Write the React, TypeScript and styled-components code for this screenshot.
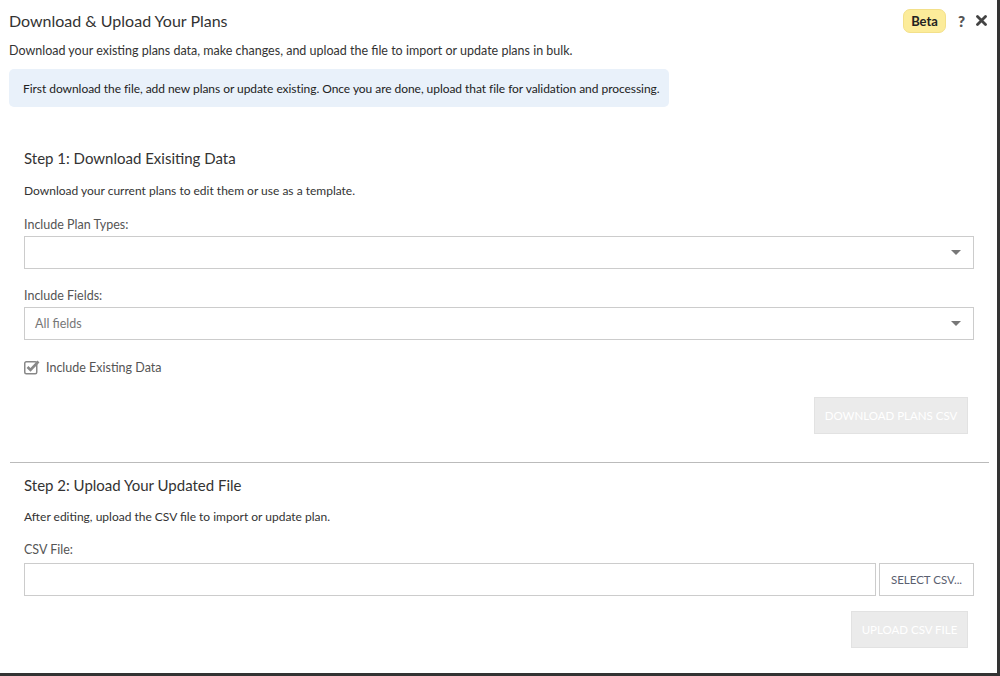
import styled, { createGlobalStyle } from "styled-components";

const GlobalStyle = createGlobalStyle`
  html, body {
    margin: 0;
    padding: 0;
    background: #fff;
  }
  body {
    font-family: "Segoe UI", Lato, "Open Sans", sans-serif;
    color: #333;
  }
`;

const App = () => {
  return (
    <>
      <GlobalStyle />
      <Modal>
        <Header>
          <Title>Download &amp; Upload Your Plans</Title>
          <HeaderTools>
            <BetaBadge>Beta</BetaBadge>
            <ToolIcon aria-label="help">?</ToolIcon>
            <ToolIcon aria-label="close">
              <svg width="11" height="11" viewBox="0 0 11 11">
                <path d="M1.5 1.5 L9.5 9.5 M9.5 1.5 L1.5 9.5" stroke="#444" strokeWidth="2.8" strokeLinecap="round" />
              </svg>
            </ToolIcon>
          </HeaderTools>
        </Header>
        <Intro>
          Download your existing plans data, make changes, and upload the file to import or update plans in bulk.
        </Intro>
        <InfoBox>
          First download the file, add new plans or update existing. Once you are done, upload that file for validation and processing.
        </InfoBox>

        <Section $top={40}>
          <StepTitle>Step 1: Download Exisiting Data</StepTitle>
          <StepText>Download your current plans to edit them or use as a template.</StepText>
          <Label>Include Plan Types:</Label>
          <Select>
            <span />
            <Caret />
          </Select>
          <Label>Include Fields:</Label>
          <Select>
            <Placeholder>All fields</Placeholder>
            <Caret />
          </Select>
          <CheckRow>
            <CheckBox>
              <svg width="16" height="15" viewBox="0 0 16 15">
                <rect x="0.75" y="1.75" width="12" height="12" rx="1.5" fill="none" stroke="#888" strokeWidth="1.5" />
                <path d="M3.5 7 L6.5 10 L14.5 1.5" fill="none" stroke="#888" strokeWidth="2.6" />
              </svg>
            </CheckBox>
            <CheckLabel>Include Existing Data</CheckLabel>
          </CheckRow>
          <ActionRow>
            <DisabledButton $width={154}>DOWNLOAD PLANS CSV</DisabledButton>
          </ActionRow>
        </Section>

        <Divider />

        <Section $top={11}>
          <StepTitle>Step 2: Upload Your Updated File</StepTitle>
          <StepText $top={13}>After editing, upload the CSV file to import or update plan.</StepText>
          <Label $top={18}>CSV File:</Label>
          <FileRow>
            <FileInput />
            <SelectButton>SELECT CSV...</SelectButton>
          </FileRow>
          <ActionRow $top={15}>
            <DisabledButton $width={117}>UPLOAD CSV FILE</DisabledButton>
          </ActionRow>
        </Section>
      </Modal>
    </>
  );
};

export default App;

const Modal = styled.div`
  width: 1000px;
  height: 676px;
  box-sizing: border-box;
  border-right: 3px solid #333;
  border-bottom: 3px solid #333;
  background: #fff;
  overflow: hidden;
`;

const Header = styled.div`
  display: flex;
  justify-content: space-between;
  align-items: center;
  padding: 8px 10px 0 9px;
  height: 25px;
`;

const Title = styled.h1`
  margin: 0;
  font-size: 16px;
  font-weight: 400;
  color: #333;
`;

const HeaderTools = styled.div`
  display: flex;
  align-items: center;
  gap: 11px;
`;

const BetaBadge = styled.span`
  display: inline-flex;
  align-items: center;
  height: 22px;
  padding: 0 7px;
  margin-right: 1px;
  background: #fcec9a;
  border: 1px solid #f3e08a;
  border-radius: 7px;
  font-size: 13px;
  font-weight: 700;
  color: #222;
`;

const ToolIcon = styled.span`
  display: inline-flex;
  align-items: center;
  justify-content: center;
  font-size: 15px;
  font-weight: 800;
  color: #555;
`;

const Intro = styled.p`
  margin: 10px 0 0 9px;
  font-size: 12.5px;
  color: #333;
`;

const InfoBox = styled.div`
  margin: 11px 0 0 9px;
  width: 660px;
  height: 38px;
  box-sizing: border-box;
  padding: 0 14px;
  display: flex;
  align-items: center;
  white-space: nowrap;
  background: #e9f1fa;
  border-radius: 5px;
  font-size: 12px;
  letter-spacing: -0.05px;
  color: #222;
`;

const Section = styled.div<{ $top: number }>`
  padding: ${({ $top }) => $top}px 23px 0 24px;
`;

const StepTitle = styled.h2`
  margin: 0;
  font-size: 15px;
  font-weight: 400;
  color: #333;
  line-height: 22px;
`;

const StepText = styled.p<{ $top?: number }>`
  margin: ${({ $top }) => $top ?? 14}px 0 0;
  font-size: 12px;
  color: #333;
`;

const Label = styled.div<{ $top?: number }>`
  margin: ${({ $top }) => $top ?? 19}px 0 4px;
  font-size: 12.5px;
  color: #555;
`;

const Select = styled.div`
  display: flex;
  align-items: center;
  justify-content: space-between;
  height: 33px;
  box-sizing: border-box;
  border: 1px solid #ccc;
  padding: 0 12px 0 10px;
  background: #fff;
`;

const Placeholder = styled.span`
  font-size: 12.5px;
  color: #777;
`;

const Caret = styled.span`
  width: 0;
  height: 0;
  border-left: 5px solid transparent;
  border-right: 5px solid transparent;
  border-top: 5px solid #777;
`;

const CheckRow = styled.div`
  display: flex;
  align-items: center;
  gap: 6px;
  margin-top: 20px;
`;

const CheckBox = styled.span`
  display: inline-flex;
`;

const CheckLabel = styled.span`
  font-size: 12.5px;
  color: #555;
`;

const ActionRow = styled.div<{ $top?: number }>`
  display: flex;
  justify-content: flex-end;
  margin-top: ${({ $top }) => $top ?? 22}px;
  padding-right: 6px;
`;

const DisabledButton = styled.button<{ $width: number }>`
  width: ${({ $width }) => $width}px;
  height: 37px;
  border: 1px solid #e2e2e2;
  background: #ebebeb;
  color: #fff;
  font-family: inherit;
  font-size: 11.5px;
  padding: 0;
  cursor: default;
`;

const Divider = styled.hr`
  margin: 28px 8px 0 10px;
  border: none;
  border-top: 1px solid #bbb;
`;

const FileRow = styled.div`
  display: flex;
  gap: 3px;
  margin-top: 6px;
`;

const FileInput = styled.div`
  flex: 1;
  height: 33px;
  box-sizing: border-box;
  border: 1px solid #ccc;
`;

const SelectButton = styled.button`
  width: 95px;
  height: 33px;
  border: 1px solid #ccc;
  background: #fff;
  color: #5a6070;
  font-family: inherit;
  font-size: 11.5px;
  padding: 0;
`;
